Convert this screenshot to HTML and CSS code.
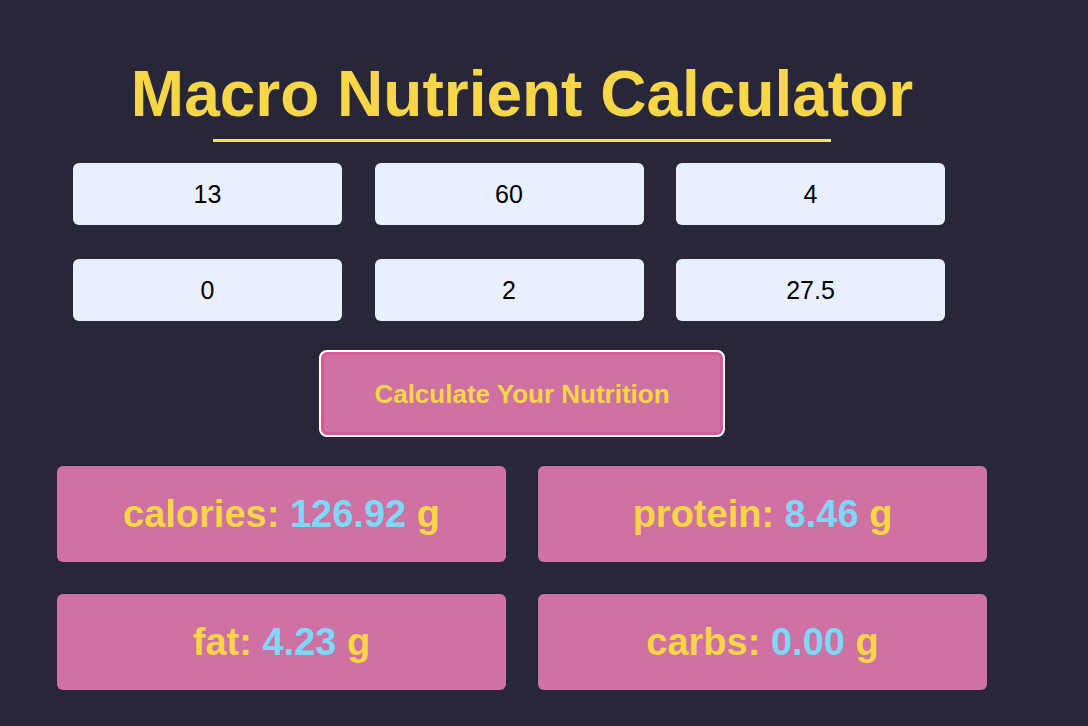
FILE: index.html
```html
<!DOCTYPE html>
<html lang="en">
<head>
<meta charset="utf-8">
<title>Macro Nutrient Calculator</title>
<link rel="stylesheet" href="styles.css">
</head>
<body>
<main class="app">
  <h1 class="title">Macro Nutrient Calculator</h1>
  <div class="rule"></div>
  <div class="inputs">
    <input class="field" type="text" value="13">
    <input class="field" type="text" value="60">
    <input class="field" type="text" value="4">
    <input class="field" type="text" value="0">
    <input class="field" type="text" value="2">
    <input class="field" type="text" value="27.5">
  </div>
  <div class="actions">
    <button class="calc" type="button">Calculate Your Nutrition</button>
  </div>
  <div class="results">
    <div class="card">calories: <span class="num">126.92</span> g</div>
    <div class="card">protein: <span class="num">8.46</span> g</div>
    <div class="card">fat: <span class="num">4.23</span> g</div>
    <div class="card">carbs: <span class="num">0.00</span> g</div>
  </div>
</main>
</body>
</html>
```
FILE: styles.css
```css
html, body {
  margin: 0;
  padding: 0;
  background: #28273a;
  height: 100%;
}

body {
  font-family: "Liberation Sans", Arial, sans-serif;
}

.app {
  width: 930px;
  margin-left: 57px;
  display: flex;
  flex-direction: column;
}

.title {
  margin: 57px 0 0;
  font-size: 64px;
  font-weight: bold;
  line-height: normal;
  color: #f7d648;
  text-align: center;
}

.rule {
  width: 618px;
  height: 3px;
  background: #f6ea4b;
  margin: 8px 0 0 156px;
}

.inputs {
  display: grid;
  grid-template-columns: 269px 269px 269px;
  column-gap: 32.5px;
  row-gap: 34px;
  margin: 21px 0 0 16px;
}

.field {
  box-sizing: border-box;
  height: 62px;
  width: 269px;
  border: none;
  border-radius: 6px;
  background: #e8f0fe;
  color: #000;
  font-family: "Liberation Sans", Arial, sans-serif;
  font-size: 25px;
  text-align: center;
  padding: 0;
  outline: none;
}

.actions {
  display: flex;
  margin: 29px 0 0 262px;
}

.calc {
  box-sizing: border-box;
  width: 406px;
  height: 87px;
  border: 2px solid #ffffff;
  border-radius: 8px;
  background: #cf71a3;
  box-shadow: inset 0 0 0 3px #d85b98;
  color: #f7d648;
  font-family: "Liberation Sans", Arial, sans-serif;
  font-size: 26px;
  font-weight: bold;
  padding: 2px 0 0;
  cursor: pointer;
}

.results {
  display: grid;
  grid-template-columns: 449px 449px;
  column-gap: 32px;
  row-gap: 32px;
  margin-top: 29px;
}

.card {
  height: 96px;
  border-radius: 6px;
  background: #cf71a3;
  color: #f7d648;
  font-size: 38px;
  font-weight: bold;
  display: flex;
  align-items: center;
  justify-content: center;
  white-space: pre;
}

.num {
  color: #7ed8f7;
}
```
